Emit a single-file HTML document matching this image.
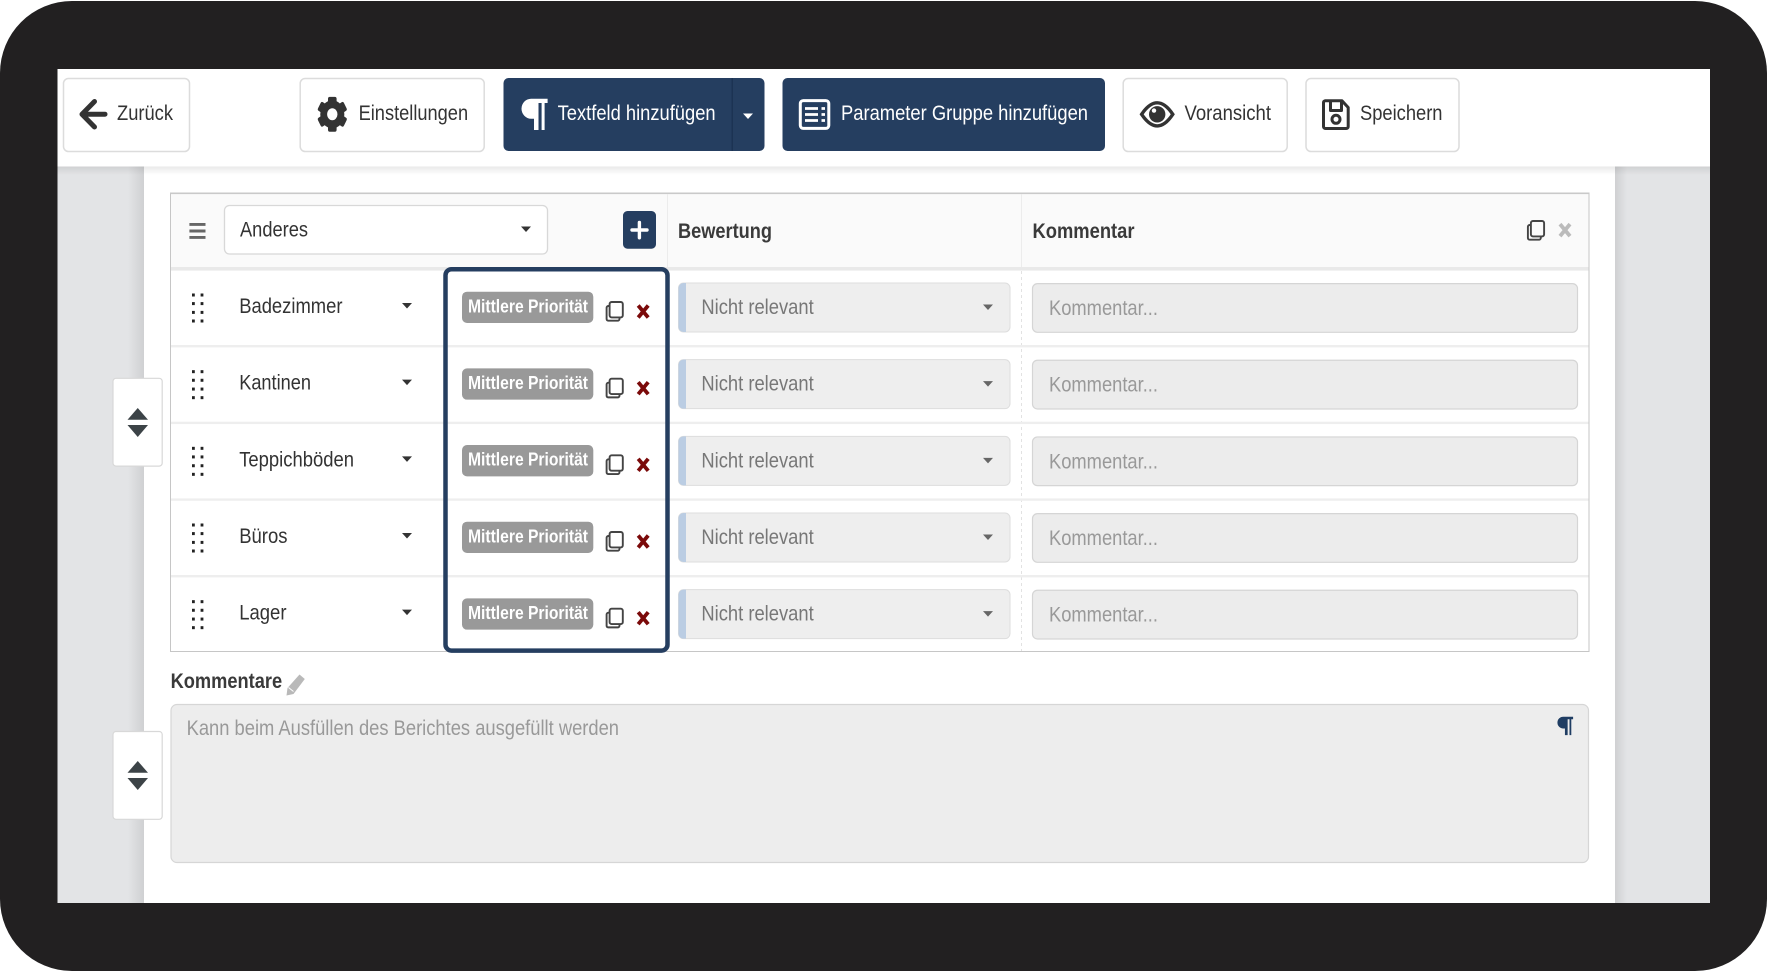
<!DOCTYPE html>
<html lang="de"><head><meta charset="utf-8"><title>Berichtsvorlage</title>
<style>html,body{margin:0;padding:0;background:#fff;width:1767px;height:971px;overflow:hidden}svg{display:block;filter:blur(.35px)}text{font-family:"Liberation Sans",Arial,sans-serif}</style>
</head><body>
<svg xmlns="http://www.w3.org/2000/svg" width="1767" height="971" viewBox="0 0 1767 971">
<defs>
<linearGradient id="sl" x1="0" x2="1" y1="0" y2="0"><stop offset="0" stop-color="#e3e4e6"/><stop offset="1" stop-color="#cfd0d2"/></linearGradient>
<linearGradient id="sr" x1="0" x2="1" y1="0" y2="0"><stop offset="0" stop-color="#cfd0d2"/><stop offset="1" stop-color="#e3e4e6"/></linearGradient>
<linearGradient id="st" x1="0" x2="0" y1="0" y2="1"><stop offset="0" stop-color="#000" stop-opacity=".09"/><stop offset="1" stop-color="#000" stop-opacity="0"/></linearGradient>
<g id="copy" fill="none" stroke-width="1.9">
<rect x="3.9" y="1" width="13.2" height="15.4" rx="2"/>
<path d="M3.9 5H2.6A1.8 1.8 0 0 0 .9 6.8V18A1.8 1.8 0 0 0 2.6 19.7H12A1.8 1.8 0 0 0 13.8 18V16.4"/>
</g>
<g id="cross" stroke-width="3.8" fill="none"><path d="M1.5 1.5L11.5 13.5M11.5 1.5L1.5 13.5"/></g>
<g id="grip" fill="#222"><rect x="0" y="0" width="2.8" height="3"/><rect x="8.6" y="0" width="2.8" height="3"/><rect x="0" y="8.6" width="2.8" height="3"/><rect x="8.6" y="8.6" width="2.8" height="3"/><rect x="0" y="17.4" width="2.8" height="3"/><rect x="8.6" y="17.4" width="2.8" height="3"/><rect x="0" y="26" width="2.8" height="3"/><rect x="8.6" y="26" width="2.8" height="3"/></g>
<g id="updown" fill="#3c4347"><path d="M10.25 0L20.5 11.7H0Z"/><path d="M0 17H20.5L10.25 29Z"/></g>
<path id="pil" d="M26 0H9.5A9.6 10 0 0 0 9.5 20H12.4V31.3H16.9V4.3H20V31.3H23V4.3H26Z"/>
</defs>

<rect width="1767" height="971" fill="#fff"/>
<rect x="0" y="1" width="1767" height="970" rx="72" ry="72" fill="#222021"/>
<rect x="57.5" y="69" width="1652.5" height="834" fill="#e3e4e6"/>
<rect x="128" y="166" width="16" height="737" fill="url(#sl)"/>
<rect x="1615" y="166" width="12" height="737" fill="url(#sr)"/>
<rect x="144" y="166" width="1471" height="737" fill="#fff"/>
<rect x="57.5" y="166" width="1652.5" height="9" fill="url(#st)"/>
<rect x="57.5" y="69" width="1652.5" height="97.5" fill="#fff"/>

<!-- toolbar -->
<g fill="#fff" stroke="#dcdcdc" stroke-width="1.5">
<rect x="63.5" y="78.5" width="126" height="73" rx="5"/>
<rect x="300.2" y="78.5" width="184" height="73" rx="5"/>
<rect x="1123.2" y="78.5" width="164" height="73" rx="5"/>
<rect x="1306" y="78.5" width="153" height="73" rx="5"/>
</g>
<rect x="503.5" y="78" width="261" height="73" rx="5" fill="#253e60"/>
<rect x="731.6" y="78" width="1.2" height="73" fill="#1b3150"/>
<rect x="782.5" y="78" width="322.5" height="73" rx="5" fill="#253e60"/>

<path d="M105 114.2H84M94.5 101.5L82 114.2L94.5 127" fill="none" stroke="#333" stroke-width="5" stroke-linecap="round" stroke-linejoin="round"/>
<text x="117" y="120" font-size="21" fill="#333" textLength="56" lengthAdjust="spacingAndGlyphs">Zurück</text>

<g transform="translate(332.3 114.3) scale(.86 1)" fill="#333">
<circle r="14"/>
<rect x="-5" y="-17.4" width="10" height="34.8" rx="2"/>
<rect x="-5" y="-17.4" width="10" height="34.8" rx="2" transform="rotate(60)"/>
<rect x="-5" y="-17.4" width="10" height="34.8" rx="2" transform="rotate(120)"/>
<circle r="6" fill="#fff"/>
</g>
<text x="358.6" y="120" font-size="21" fill="#333" textLength="109.5" lengthAdjust="spacingAndGlyphs">Einstellungen</text>

<use href="#pil" fill="#fff" transform="translate(521.6 98.7)"/>
<text x="557.6" y="120" font-size="21" fill="#fff" textLength="158" lengthAdjust="spacingAndGlyphs">Textfeld hinzufügen</text>
<path d="M743 113.5H753L748 119Z" fill="#fff"/>

<g fill="none" stroke="#fff">
<rect x="800.3" y="100.6" width="28.5" height="27.8" rx="3" stroke-width="3"/>
<path d="M805 108.5H818M805 114.5H818M805 120.5H818" stroke-width="2.8"/>
<path d="M821.5 108.5H825M821.5 114.5H825M821.5 120.5H825" stroke-width="2.8"/>
</g>
<text x="841" y="120" font-size="21" fill="#fff" textLength="247" lengthAdjust="spacingAndGlyphs">Parameter Gruppe hinzufügen</text>

<path d="M1141.6 114.3C1147.5 105.5 1153 102.8 1157.2 102.8C1161.4 102.8 1167 105.5 1172.8 114.3C1167 123 1161.4 125.9 1157.2 125.9C1153 125.9 1147.5 123 1141.6 114.3Z" fill="#fff" stroke="#333" stroke-width="3.4"/>
<circle cx="1157.2" cy="114.3" r="8.2" fill="#333"/>
<circle cx="1154" cy="110.6" r="2.2" fill="#fff"/>
<text x="1184.5" y="120" font-size="21" fill="#333" textLength="86.5" lengthAdjust="spacingAndGlyphs">Voransicht</text>

<g fill="none" stroke="#333" stroke-width="3" stroke-linejoin="round">
<path d="M1325 100.8H1342L1348.2 107.5V126.5A2 2 0 0 1 1346.2 128.5H1325.5A2 2 0 0 1 1323.5 126.5V102.8A2 2 0 0 1 1325 100.8Z"/>
<path d="M1330.5 101V110.5H1341.5V101"/>
<circle cx="1336" cy="119.3" r="4"/>
</g>
<text x="1360" y="120" font-size="21" fill="#333" textLength="82.5" lengthAdjust="spacingAndGlyphs">Speichern</text>

<!-- table -->
<rect x="170.5" y="193" width="1418.5" height="458.5" fill="#fff" stroke="#c6c6c6" stroke-width="1"/>
<rect x="171" y="193.5" width="1417.5" height="74" fill="#fafafa"/>
<rect x="170" y="192.5" width="1419" height="1.6" fill="#c9c9c9"/>
<rect x="171" y="267" width="1417.5" height="3.6" fill="#e9e9e9"/>
<rect x="667" y="194" width="1" height="73" fill="#ececec"/>
<rect x="1021" y="194" width="1" height="73" fill="#ececec"/>
<path d="M1021.5 271V651" stroke="#e2e2e2" stroke-width="1" stroke-dasharray="3 3"/>
<g fill="#eeeeee">
<rect x="171" y="345" width="1417.5" height="2.4"/>
<rect x="171" y="421.7" width="1417.5" height="2.4"/>
<rect x="171" y="498.4" width="1417.5" height="2.4"/>
<rect x="171" y="575" width="1417.5" height="2.4"/>
</g>

<!-- table header -->
<path d="M189.4 224.4H205.5M189.4 231H205.5M189.4 237.4H205.5" stroke="#666" stroke-width="2.9"/>
<rect x="224.5" y="205.5" width="323" height="48.5" rx="5" fill="#fff" stroke="#d8d8d8" stroke-width="1.3"/>
<text x="240" y="236.6" font-size="21" fill="#333" textLength="68" lengthAdjust="spacingAndGlyphs">Anderes</text>
<path d="M521 226.5H531L526 232Z" fill="#333"/>
<rect x="623" y="211" width="33" height="37.7" rx="4.5" fill="#253e60"/>
<path d="M639.4 222.5V237.8M632 230H647" stroke="#fff" stroke-width="3.4" stroke-linecap="round"/>
<text x="678" y="238" font-size="21.5" font-weight="bold" fill="#3a3a3a" textLength="94" lengthAdjust="spacingAndGlyphs">Bewertung</text>
<text x="1032.5" y="238" font-size="21.5" font-weight="bold" fill="#3a3a3a" textLength="102" lengthAdjust="spacingAndGlyphs">Kommentar</text>
<use href="#copy" x="1527" y="220" stroke="#444"/>
<use href="#cross" x="1558.5" y="222.6" stroke="#bbb"/>

<!-- rows -->
<g transform="translate(0 0)">
<use href="#grip" x="192" y="293.5"/>
<text x="239.2" y="313" font-size="21" fill="#333" textLength="103.3" lengthAdjust="spacingAndGlyphs">Badezimmer</text>
<path d="M402 303H412L407 308.5Z" fill="#333"/>
<rect x="462" y="291.7" width="131.3" height="31.3" rx="5" fill="#999"/>
<text x="468" y="312.3" font-size="18.5" font-weight="bold" fill="#fff" textLength="120" lengthAdjust="spacingAndGlyphs">Mittlere Priorität</text>
<use href="#copy" x="605.7" y="301" stroke="#444"/>
<use href="#cross" x="636.7" y="304" stroke="#7b0a0a"/>
<rect x="678.5" y="283" width="331.5" height="49" rx="5" fill="#eee" stroke="#ddd"/>
<path d="M686 283H683.5A5 5 0 0 0 678.5 288V327A5 5 0 0 0 683.5 332H686Z" fill="#bbcde3"/>
<text x="701.4" y="314" font-size="21" fill="#777" textLength="112.3" lengthAdjust="spacingAndGlyphs">Nicht relevant</text>
<path d="M983 304.5H993L988 310Z" fill="#666"/>
<rect x="1032.5" y="283.6" width="545" height="48.7" rx="5" fill="#ececec" stroke="#d5d5d5" stroke-width="1.2"/>
<text x="1049" y="315" font-size="21" fill="#999" textLength="109" lengthAdjust="spacingAndGlyphs">Kommentar...</text>
</g>
<g transform="translate(0 76.67)">
<use href="#grip" x="192" y="293.5"/>
<text x="239.2" y="313" font-size="21" fill="#333" textLength="71.8" lengthAdjust="spacingAndGlyphs">Kantinen</text>
<path d="M402 303H412L407 308.5Z" fill="#333"/>
<rect x="462" y="291.7" width="131.3" height="31.3" rx="5" fill="#999"/>
<text x="468" y="312.3" font-size="18.5" font-weight="bold" fill="#fff" textLength="120" lengthAdjust="spacingAndGlyphs">Mittlere Priorität</text>
<use href="#copy" x="605.7" y="301" stroke="#444"/>
<use href="#cross" x="636.7" y="304" stroke="#7b0a0a"/>
<rect x="678.5" y="283" width="331.5" height="49" rx="5" fill="#eee" stroke="#ddd"/>
<path d="M686 283H683.5A5 5 0 0 0 678.5 288V327A5 5 0 0 0 683.5 332H686Z" fill="#bbcde3"/>
<text x="701.4" y="314" font-size="21" fill="#777" textLength="112.3" lengthAdjust="spacingAndGlyphs">Nicht relevant</text>
<path d="M983 304.5H993L988 310Z" fill="#666"/>
<rect x="1032.5" y="283.6" width="545" height="48.7" rx="5" fill="#ececec" stroke="#d5d5d5" stroke-width="1.2"/>
<text x="1049" y="315" font-size="21" fill="#999" textLength="109" lengthAdjust="spacingAndGlyphs">Kommentar...</text>
</g>
<g transform="translate(0 153.33)">
<use href="#grip" x="192" y="293.5"/>
<text x="239.2" y="313" font-size="21" fill="#333" textLength="114.8" lengthAdjust="spacingAndGlyphs">Teppichböden</text>
<path d="M402 303H412L407 308.5Z" fill="#333"/>
<rect x="462" y="291.7" width="131.3" height="31.3" rx="5" fill="#999"/>
<text x="468" y="312.3" font-size="18.5" font-weight="bold" fill="#fff" textLength="120" lengthAdjust="spacingAndGlyphs">Mittlere Priorität</text>
<use href="#copy" x="605.7" y="301" stroke="#444"/>
<use href="#cross" x="636.7" y="304" stroke="#7b0a0a"/>
<rect x="678.5" y="283" width="331.5" height="49" rx="5" fill="#eee" stroke="#ddd"/>
<path d="M686 283H683.5A5 5 0 0 0 678.5 288V327A5 5 0 0 0 683.5 332H686Z" fill="#bbcde3"/>
<text x="701.4" y="314" font-size="21" fill="#777" textLength="112.3" lengthAdjust="spacingAndGlyphs">Nicht relevant</text>
<path d="M983 304.5H993L988 310Z" fill="#666"/>
<rect x="1032.5" y="283.6" width="545" height="48.7" rx="5" fill="#ececec" stroke="#d5d5d5" stroke-width="1.2"/>
<text x="1049" y="315" font-size="21" fill="#999" textLength="109" lengthAdjust="spacingAndGlyphs">Kommentar...</text>
</g>
<g transform="translate(0 230)">
<use href="#grip" x="192" y="293.5"/>
<text x="239.2" y="313" font-size="21" fill="#333" textLength="48.3" lengthAdjust="spacingAndGlyphs">Büros</text>
<path d="M402 303H412L407 308.5Z" fill="#333"/>
<rect x="462" y="291.7" width="131.3" height="31.3" rx="5" fill="#999"/>
<text x="468" y="312.3" font-size="18.5" font-weight="bold" fill="#fff" textLength="120" lengthAdjust="spacingAndGlyphs">Mittlere Priorität</text>
<use href="#copy" x="605.7" y="301" stroke="#444"/>
<use href="#cross" x="636.7" y="304" stroke="#7b0a0a"/>
<rect x="678.5" y="283" width="331.5" height="49" rx="5" fill="#eee" stroke="#ddd"/>
<path d="M686 283H683.5A5 5 0 0 0 678.5 288V327A5 5 0 0 0 683.5 332H686Z" fill="#bbcde3"/>
<text x="701.4" y="314" font-size="21" fill="#777" textLength="112.3" lengthAdjust="spacingAndGlyphs">Nicht relevant</text>
<path d="M983 304.5H993L988 310Z" fill="#666"/>
<rect x="1032.5" y="283.6" width="545" height="48.7" rx="5" fill="#ececec" stroke="#d5d5d5" stroke-width="1.2"/>
<text x="1049" y="315" font-size="21" fill="#999" textLength="109" lengthAdjust="spacingAndGlyphs">Kommentar...</text>
</g>
<g transform="translate(0 306.67)">
<use href="#grip" x="192" y="293.5"/>
<text x="239.2" y="313" font-size="21" fill="#333" textLength="47.3" lengthAdjust="spacingAndGlyphs">Lager</text>
<path d="M402 303H412L407 308.5Z" fill="#333"/>
<rect x="462" y="291.7" width="131.3" height="31.3" rx="5" fill="#999"/>
<text x="468" y="312.3" font-size="18.5" font-weight="bold" fill="#fff" textLength="120" lengthAdjust="spacingAndGlyphs">Mittlere Priorität</text>
<use href="#copy" x="605.7" y="301" stroke="#444"/>
<use href="#cross" x="636.7" y="304" stroke="#7b0a0a"/>
<rect x="678.5" y="283" width="331.5" height="49" rx="5" fill="#eee" stroke="#ddd"/>
<path d="M686 283H683.5A5 5 0 0 0 678.5 288V327A5 5 0 0 0 683.5 332H686Z" fill="#bbcde3"/>
<text x="701.4" y="314" font-size="21" fill="#777" textLength="112.3" lengthAdjust="spacingAndGlyphs">Nicht relevant</text>
<path d="M983 304.5H993L988 310Z" fill="#666"/>
<rect x="1032.5" y="283.6" width="545" height="48.7" rx="5" fill="#ececec" stroke="#d5d5d5" stroke-width="1.2"/>
<text x="1049" y="315" font-size="21" fill="#999" textLength="109" lengthAdjust="spacingAndGlyphs">Kommentar...</text>
</g>

<rect x="445.5" y="269.2" width="222" height="381.4" rx="6" fill="none" stroke="#253e60" stroke-width="4.5"/>

<!-- comments -->
<text x="170.6" y="688" font-size="21" font-weight="bold" fill="#3a3a3a" textLength="111.5" lengthAdjust="spacingAndGlyphs">Kommentare</text>
<path d="M299.5 674.5L304.8 679L293.5 694L286.5 695.5L287.5 688Z" fill="#b9b9b9"/>
<path d="M288.5 687.5L293.5 691.5" stroke="#fff" stroke-width="1"/>
<rect x="171" y="704.5" width="1417.5" height="158" rx="6" fill="#ededed" stroke="#d6d6d6" stroke-width="1.2"/>
<text x="186.6" y="735" font-size="21" fill="#999" textLength="432.4" lengthAdjust="spacingAndGlyphs">Kann beim Ausfüllen des Berichtes ausgefüllt werden</text>
<use href="#pil" fill="#1f3d63" transform="translate(1557.5 716.7) scale(.6 .59)"/>

<!-- side buttons -->
<rect x="113" y="378.3" width="49.2" height="87.8" rx="3" fill="#fff" stroke="#d8d8d8" stroke-width="1.2"/>
<use href="#updown" x="127.5" y="408"/>
<rect x="113" y="731.5" width="49.2" height="87.8" rx="3" fill="#fff" stroke="#d8d8d8" stroke-width="1.2"/>
<use href="#updown" x="127.5" y="761"/>
</svg>
</body></html>
